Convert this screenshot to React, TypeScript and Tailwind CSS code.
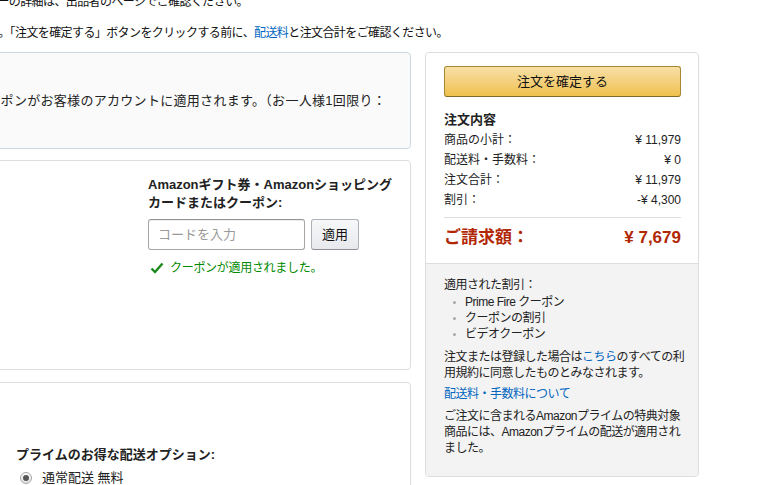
import React from "react";

const F = { fontFamily: '"Liberation Sans", "Noto Sans CJK JP", sans-serif' };

function Row({ label, value }: { label: string; value: string }) {
  return (
    <div className="flex justify-between text-[12px] leading-[20px] text-[#222]">
      <span>{label}</span>
      <span>{value}</span>
    </div>
  );
}

export default function App() {
  return (
    <div className="w-[769px] h-[485px] overflow-hidden bg-white text-[#111]" style={F}>
      <div className="-ml-[100px]">
        {/* top notes */}
        <div className="-mt-[8px] text-[12px] leading-[20px] tracking-[-0.6px] whitespace-nowrap pl-[86px]">
          ラーの詳細は、出品者のページでご確認ください。
        </div>
        <div className="mt-[11px] text-[12px] leading-[20px] tracking-[-0.6px] whitespace-nowrap pl-[88px]">
          す。「注文を確定する」ボタンをクリックする前に、<span className="text-[#0066c0]">配送料</span>と注文合計をご確認ください。
        </div>

        <div className="flex mt-[9px] items-start">
          {/* left column */}
          <div className="w-[511px] flex flex-col">
            <div className="h-[97px] rounded-[4px] border border-[#cbd8e1] bg-[#fafafa] flex items-center pl-[73px]">
              <span className="text-[13px] tracking-[0.3px] whitespace-nowrap text-[#222]">
                クーポンがお客様のアカウントに適用されます。（お一人様1回限り：
              </span>
            </div>

            <div className="mt-[11px] h-[210px] rounded-[4px] border border-[#ddd] bg-white pl-[247px] pt-[15px]">
              <div className="text-[13px] font-bold leading-[18px] text-[#222]">
                Amazonギフト券・Amazonショッピング
                <br />
                カードまたはクーポン:
              </div>
              <div className="mt-[7px] flex gap-[6px]">
                <div className="w-[157px] h-[31px] rounded-[3px] border border-[#a6a6a6] border-t-[#949494] bg-white flex items-center pl-[9px] text-[13px] text-[#999] shadow-[inset_0_1px_0_rgba(0,0,0,0.07)]">
                  コードを入力
                </div>
                <div className="w-[48px] h-[31px] rounded-[3px] border border-[#adb1b8] border-b-[#8d9096] bg-gradient-to-b from-[#f7f8fa] to-[#e7e9ec] flex items-center justify-center text-[13px] text-[#111]">
                  適用
                </div>
              </div>
              <div className="mt-[10px] flex items-center text-[12px] leading-[16px] tracking-[-0.3px] text-[#008a00]">
                <svg width="14" height="12" viewBox="0 0 14 12" className="ml-[2px] mr-[6px]">
                  <path d="M1.5 6.5 L5 10 L12.5 1.5" fill="none" stroke="#1d8a1d" strokeWidth="2.4" />
                </svg>
                クーポンが適用されました。
              </div>
            </div>

            <div className="mt-[12px] h-[200px] rounded-[4px] border border-[#ddd] bg-white pl-[115px] pt-[63px]">
              <div className="text-[13px] font-bold leading-[18px] text-[#222]">
                プライムのお得な配送オプション:
              </div>
              <div className="mt-[5px] flex items-center text-[13px] leading-[18px] text-[#222]">
                <div className="ml-[4px] w-[12px] h-[12px] rounded-full border border-[#a6a6a6] bg-gradient-to-b from-[#fafafa] to-[#e4e4e4] flex items-center justify-center">
                  <div className="w-[6px] h-[6px] rounded-full bg-[#555]" />
                </div>
                <span className="ml-[10px]">通常配送 無料</span>
              </div>
            </div>
          </div>

          {/* right column */}
          <div className="ml-[14px] w-[274px] rounded-[4px] border border-[#ddd] bg-white overflow-hidden">
            <div className="pl-[18px] pr-[17px] pt-[13px] pb-[14px]">
              <div className="h-[31px] rounded-[3px] border border-[#a88734] border-b-[#846a29] bg-gradient-to-b from-[#f7dfa5] to-[#f0c14b] flex items-center justify-center text-[13px] text-[#111]">
                注文を確定する
              </div>
              <div className="mt-[13px] text-[13px] font-bold leading-[20px] text-[#222]">注文内容</div>
              <Row label="商品の小計：" value="¥ 11,979" />
              <Row label="配送料・手数料：" value="¥ 0" />
              <Row label="注文合計：" value="¥ 11,979" />
              <Row label="割引：" value="-¥ 4,300" />
              <div className="mt-[7px] border-t border-[#ddd]" />
              <div className="mt-[9px] flex justify-between items-center text-[17px] font-bold leading-[22px] text-[#b12704]">
                <span>ご請求額：</span>
                <span>¥ 7,679</span>
              </div>
            </div>
            <div className="border-t border-[#ddd] bg-[#f3f3f3] pl-[18px] pr-[6px] pt-[13px] pb-[20px] text-[12px] leading-[16px] tracking-[-0.5px] text-[#222] whitespace-nowrap">
              <div>適用された割引：</div>
              <ul className="mt-[1px]">
                {["Prime Fire クーポン", "クーポンの割引", "ビデオクーポン"].map((t) => (
                  <li key={t} className="flex items-center">
                    <span className="ml-[9px] mr-[9px] w-[3px] h-[3px] rounded-full bg-[#aaa]" />
                    <span>{t}</span>
                  </li>
                ))}
              </ul>
              <div className="mt-[7px]">
                注文または登録した場合は<span className="text-[#0066c0]">こちら</span>のすべての利
                <br />
                用規約に同意したものとみなされます。
              </div>
              <div className="mt-[5px] text-[#0066c0]">配送料・手数料について</div>
              <div className="mt-[6px]">
                ご注文に含まれるAmazonプライムの特典対象
                <br />
                商品には、Amazonプライムの配送が適用され
                <br />
                ました。
              </div>
            </div>
          </div>
        </div>
      </div>
    </div>
  );
}
